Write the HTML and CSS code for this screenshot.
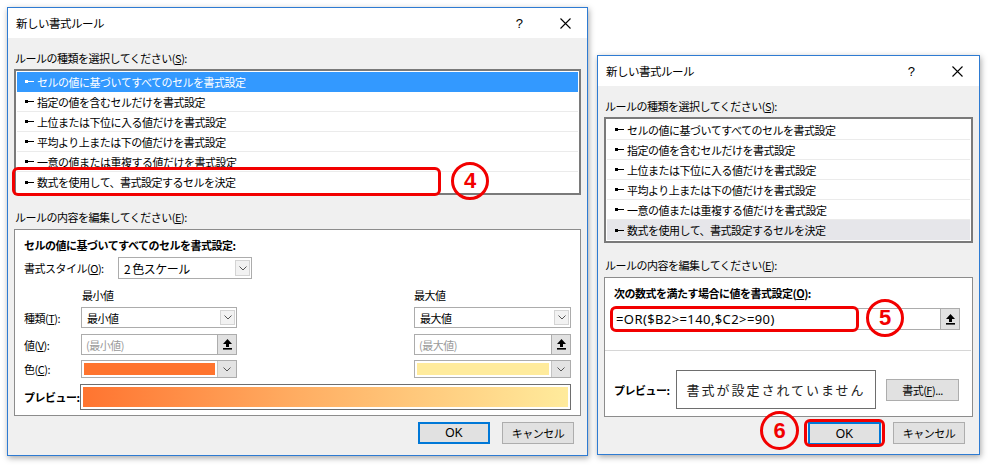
FILE: index.html
```html
<!DOCTYPE html>
<html lang="ja">
<head>
    <meta charset="UTF-8">
    <title>新しい書式ルール</title>
    <link rel="stylesheet" href="styles.css">
</head>
<body>
    <!-- left dialog: two-colour scale -->
    <div class="dialog dialog-left">
        <div class="titlebar">
            <span class="title">新しい書式ルール</span>
            <span class="help">?</span>
            <span class="close"><svg width="11" height="11" viewBox="0 0 11 11"><path d="M0.5 0.5L10.5 10.5M10.5 0.5L0.5 10.5" stroke="#000" stroke-width="1.1"/></svg></span>
        </div>
        <div class="dlg-body">
            <div class="label">ルールの種類を選択してください(<u>S</u>):</div>
            <ul class="rule-list">
                <li class="selected"><svg class="arrow" width="9" height="5" viewBox="0 0 9 5"><rect x="0" y="1" width="3" height="3" fill="currentColor"/><rect x="3" y="2" width="6" height="1" fill="currentColor"/></svg>セルの値に基づいてすべてのセルを書式設定</li>
                <li><svg class="arrow" width="9" height="5" viewBox="0 0 9 5"><rect x="0" y="1" width="3" height="3" fill="currentColor"/><rect x="3" y="2" width="6" height="1" fill="currentColor"/></svg>指定の値を含むセルだけを書式設定</li>
                <li><svg class="arrow" width="9" height="5" viewBox="0 0 9 5"><rect x="0" y="1" width="3" height="3" fill="currentColor"/><rect x="3" y="2" width="6" height="1" fill="currentColor"/></svg>上位または下位に入る値だけを書式設定</li>
                <li><svg class="arrow" width="9" height="5" viewBox="0 0 9 5"><rect x="0" y="1" width="3" height="3" fill="currentColor"/><rect x="3" y="2" width="6" height="1" fill="currentColor"/></svg>平均より上または下の値だけを書式設定</li>
                <li><svg class="arrow" width="9" height="5" viewBox="0 0 9 5"><rect x="0" y="1" width="3" height="3" fill="currentColor"/><rect x="3" y="2" width="6" height="1" fill="currentColor"/></svg>一意の値または重複する値だけを書式設定</li>
                <li><svg class="arrow" width="9" height="5" viewBox="0 0 9 5"><rect x="0" y="1" width="3" height="3" fill="currentColor"/><rect x="3" y="2" width="6" height="1" fill="currentColor"/></svg>数式を使用して、書式設定するセルを決定</li>
            </ul>
            <div class="label label-gap">ルールの内容を編集してください(<u>E</u>):</div>
            <div class="edit-box">
                <div class="heading">セルの値に基づいてすべてのセルを書式設定:</div>
                <div class="row style-row">
                    <span class="style-label">書式スタイル(<u>O</u>):</span>
                    <div class="select style-select">2 色スケール<span class="dd"><svg width="8" height="5" viewBox="0 0 8 5"><path d="M0.5 0.5L4 4L7.5 0.5" fill="none" stroke="#555" stroke-width="1"/></svg></span></div>
                </div>
                <div class="row head-row">
                    <span class="field-label"></span>
                    <span class="col-min">最小値</span>
                    <span class="col-max">最大値</span>
                </div>
                <div class="row type-row">
                    <span class="field-label">種類(<u>T</u>):</span>
                    <div class="select col-min">最小値<span class="dd"><svg width="8" height="5" viewBox="0 0 8 5"><path d="M0.5 0.5L4 4L7.5 0.5" fill="none" stroke="#555" stroke-width="1"/></svg></span></div>
                    <div class="select col-max">最大値<span class="dd"><svg width="8" height="5" viewBox="0 0 8 5"><path d="M0.5 0.5L4 4L7.5 0.5" fill="none" stroke="#555" stroke-width="1"/></svg></span></div>
                </div>
                <div class="row value-row">
                    <span class="field-label">値(<u>V</u>):</span>
                    <div class="input col-min"><span class="placeholder">(最小値)</span><span class="pick"><svg width="9" height="11" viewBox="0 0 9 11"><path d="M4.5 0L9 5H6V8H3V5H0Z" fill="#000"/><rect x="0" y="9" width="9" height="1.6" fill="#000"/></svg></span></div>
                    <div class="input col-max"><span class="placeholder">(最大値)</span><span class="pick"><svg width="9" height="11" viewBox="0 0 9 11"><path d="M4.5 0L9 5H6V8H3V5H0Z" fill="#000"/><rect x="0" y="9" width="9" height="1.6" fill="#000"/></svg></span></div>
                </div>
                <div class="row color-row">
                    <span class="field-label">色(<u>C</u>):</span>
                    <div class="color col-min"><span class="swatch swatch-min"></span><span class="color-dd"><svg width="8" height="5" viewBox="0 0 8 5"><path d="M0.5 0.5L4 4L7.5 0.5" fill="none" stroke="#555" stroke-width="1"/></svg></span></div>
                    <div class="color col-max"><span class="swatch swatch-max"></span><span class="color-dd"><svg width="8" height="5" viewBox="0 0 8 5"><path d="M0.5 0.5L4 4L7.5 0.5" fill="none" stroke="#555" stroke-width="1"/></svg></span></div>
                </div>
                <div class="row preview-row">
                    <span class="preview-label">プレビュー:</span>
                    <div class="gradient-box"><div class="gradient"></div></div>
                </div>
            </div>
            <div class="buttons">
                <button class="btn btn-default">OK</button>
                <button class="btn">キャンセル</button>
            </div>
        </div>
        <div class="mark-rect mark-rule"></div>
        <div class="mark-circle mark-4">4</div>
    </div>

    <!-- right dialog: formula rule -->
    <div class="dialog dialog-right">
        <div class="titlebar">
            <span class="title">新しい書式ルール</span>
            <span class="help">?</span>
            <span class="close"><svg width="11" height="11" viewBox="0 0 11 11"><path d="M0.5 0.5L10.5 10.5M10.5 0.5L0.5 10.5" stroke="#000" stroke-width="1.1"/></svg></span>
        </div>
        <div class="dlg-body">
            <div class="label">ルールの種類を選択してください(<u>S</u>):</div>
            <ul class="rule-list">
                <li><svg class="arrow" width="9" height="5" viewBox="0 0 9 5"><rect x="0" y="1" width="3" height="3" fill="currentColor"/><rect x="3" y="2" width="6" height="1" fill="currentColor"/></svg>セルの値に基づいてすべてのセルを書式設定</li>
                <li><svg class="arrow" width="9" height="5" viewBox="0 0 9 5"><rect x="0" y="1" width="3" height="3" fill="currentColor"/><rect x="3" y="2" width="6" height="1" fill="currentColor"/></svg>指定の値を含むセルだけを書式設定</li>
                <li><svg class="arrow" width="9" height="5" viewBox="0 0 9 5"><rect x="0" y="1" width="3" height="3" fill="currentColor"/><rect x="3" y="2" width="6" height="1" fill="currentColor"/></svg>上位または下位に入る値だけを書式設定</li>
                <li><svg class="arrow" width="9" height="5" viewBox="0 0 9 5"><rect x="0" y="1" width="3" height="3" fill="currentColor"/><rect x="3" y="2" width="6" height="1" fill="currentColor"/></svg>平均より上または下の値だけを書式設定</li>
                <li><svg class="arrow" width="9" height="5" viewBox="0 0 9 5"><rect x="0" y="1" width="3" height="3" fill="currentColor"/><rect x="3" y="2" width="6" height="1" fill="currentColor"/></svg>一意の値または重複する値だけを書式設定</li>
                <li class="inactive"><svg class="arrow" width="9" height="5" viewBox="0 0 9 5"><rect x="0" y="1" width="3" height="3" fill="currentColor"/><rect x="3" y="2" width="6" height="1" fill="currentColor"/></svg>数式を使用して、書式設定するセルを決定</li>
            </ul>
            <div class="label label-gap">ルールの内容を編集してください(<u>E</u>):</div>
            <div class="edit-box">
                <div class="heading">次の数式を満たす場合に値を書式設定(<u>O</u>):</div>
                <div class="formula">=OR($B2&gt;=140,$C2&gt;=90)<span class="pick"><svg width="9" height="11" viewBox="0 0 9 11"><path d="M4.5 0L9 5H6V8H3V5H0Z" fill="#000"/><rect x="0" y="9" width="9" height="1.6" fill="#000"/></svg></span></div>
                <div class="sep"></div>
                <div class="row formula-preview">
                    <span class="preview-label wide">プレビュー:</span>
                    <div class="sample">書式が設定されていません</div>
                    <button class="btn btn-format">書式(<u>F</u>)...</button>
                </div>
            </div>
            <div class="buttons">
                <button class="btn btn-default">OK</button>
                <button class="btn">キャンセル</button>
            </div>
        </div>
        <div class="mark-rect mark-formula"></div>
        <div class="mark-circle mark-5">5</div>
        <div class="mark-circle mark-6">6</div>
        <div class="mark-rect mark-ok"></div>
    </div>
</body>
</html>
```

FILE: styles.css
```css
body {
    margin: 0;
    width: 990px;
    height: 465px;
    overflow: hidden;
    background: #fff;
    display: flex;
    align-items: flex-start;
    font-family: "Noto Sans CJK JP", "Noto Sans", sans-serif;
    font-size: 11px;
    letter-spacing: -0.5px;
    color: #000;
}

u {
    text-decoration: underline;
}

.dialog {
    position: relative;
    box-sizing: border-box;
    border: 1px solid #2e7bd2;
    background: #f0f0f0;
    box-shadow: 1px 2px 6px rgba(0, 0, 0, 0.35);
    display: flex;
    flex-direction: column;
}

.dialog-left {
    width: 581px;
    height: 449px;
    margin: 7px 0 0 7px;
}

.dialog-right {
    width: 383px;
    height: 400px;
    margin: 55px 0 0 9px;
}

.titlebar {
    height: 30px;
    background: #fff;
    display: flex;
    align-items: center;
    padding-left: 8px;
    font-size: 11.5px;
}

.title {
    flex: 1;
}

.help {
    width: 20px;
    margin-right: 14px;
    text-align: center;
    font-family: "Liberation Sans", sans-serif;
    font-size: 13px;
}

.close {
    width: 44px;
    display: flex;
    justify-content: center;
}

.dlg-body {
    flex: 1;
    display: flex;
    flex-direction: column;
    padding: 10px 6px 0 6px;
}

.label {
    height: 20px;
    line-height: 20px;
    padding-left: 1px;
}

.label-gap {
    margin-top: 12px;
}

.rule-list {
    list-style: none;
    margin: 1px 0 0;
    padding: 1px 1px 1px;
    border: 2px solid #7a7a7a;
    background: #fff;
}

.rule-list li {
    box-sizing: border-box;
    height: 20px;
    display: flex;
    align-items: center;
    padding-left: 8px;
    border-bottom: 1px solid #ebebeb;
}

.rule-list li:last-child {
    border-bottom: none;
}

.rule-list li.selected {
    background: #3399ff;
    color: #fff;
    border-bottom-color: #3399ff;
}

.rule-list li.inactive {
    background: #e6e6ea;
}

.arrow {
    margin-right: 3px;
    flex: none;
}

.edit-box {
    margin-top: 2px;
    background: #fff;
    border: 1px solid #8c8c8c;
    padding: 5px 9px 5px;
}

.heading {
    height: 20px;
    line-height: 20px;
    font-weight: bold;
}

.row {
    display: flex;
    align-items: center;
}

.style-row {
    height: 22px;
    margin-top: 2px;
}

.style-label {
    width: 94px;
}

.select,
.input,
.color {
    box-sizing: border-box;
    border: 1px solid #acacac;
    background: #fff;
    display: flex;
    align-items: center;
    height: 100%;
}

.select {
    padding-left: 5px;
}

.style-select {
    width: 134px;
    font-size: 12px;
}

.dd {
    margin: 0 1px 0 auto;
    width: 15px;
    height: calc(100% - 4px);
    box-sizing: border-box;
    border: 1px solid #d4d4d4;
    background: #f2f2f2;
    display: flex;
    align-items: center;
    justify-content: center;
}

.field-label {
    width: 57px;
}

.col-min {
    width: 156px;
}

.col-max {
    width: 157px;
    margin-left: auto;
}

.head-row {
    height: 20px;
    margin-top: 6px;
}

.head-row .col-min {
    padding-left: 1px;
}

.type-row {
    height: 21px;
    margin-top: 2px;
}

.value-row {
    height: 21px;
    margin-top: 6px;
}

.input {
    padding-left: 4px;
}

.placeholder {
    color: #9a9a9a;
    flex: 1;
}

.pick {
    width: 19px;
    height: 100%;
    box-sizing: border-box;
    border-left: 1px solid #adadad;
    background: #e1e1e1;
    display: flex;
    align-items: center;
    justify-content: center;
    flex: none;
}

.color-row {
    height: 18px;
    margin-top: 5px;
}

.color {
    padding: 2px 0 2px 2px;
}

.swatch {
    flex: 1;
    height: 100%;
}

.swatch-min {
    background: #ff742e;
}

.swatch-max {
    background: #ffeb9c;
}

.color-dd {
    width: 18px;
    height: calc(100% + 4px);
    margin: -2px 0 -2px 2px;
    background: #e3e3e3;
    border-left: 1px solid #c4c4c4;
    display: flex;
    align-items: center;
    justify-content: center;
}

.preview-row {
    height: 26px;
    margin-top: 6px;
}

.preview-label {
    width: 56px;
    font-weight: bold;
}

.gradient-box {
    flex: 1;
    height: 100%;
    box-sizing: border-box;
    border: 1px solid #6e6e6e;
    padding: 2px;
}

.gradient {
    height: 100%;
    background: linear-gradient(to right, #ff7430, #ffae63 45%, #ffeb9c);
}

.buttons {
    display: flex;
    justify-content: flex-end;
    gap: 12px;
    margin-top: 6px;
    padding-right: 7px;
}

.dialog-right .buttons {
    margin-top: 5px;
    padding-right: 8px;
}

.btn {
    box-sizing: border-box;
    width: 72px;
    height: 22px;
    border: 1px solid #adadad;
    background: #e1e1e1;
    font-family: "Noto Sans CJK JP", "Noto Sans", sans-serif;
    font-size: 11px;
    letter-spacing: -0.5px;
    padding: 0;
    color: #000;
}

.btn-default {
    border: 2px solid #0078d7;
    font-family: "Liberation Sans", sans-serif;
    font-size: 12px;
    letter-spacing: 0;
}

.dialog-right .btn-default {
    width: 73px;
    height: 23px;
}

.formula {
    box-sizing: border-box;
    height: 22px;
    margin: 5px 3px 0 -3px;
    border: 1px solid #acacac;
    padding-left: 4px;
    display: flex;
    align-items: center;
    justify-content: space-between;
    font-family: "Noto Sans", sans-serif;
    font-size: 13px;
    letter-spacing: 0.4px;
}

.sep {
    height: 1px;
    background: #d6d6d6;
    margin: 20px -8px 0 -9px;
}

.formula-preview {
    height: 39px;
    margin-top: 19px;
    margin-bottom: 2px;
}

.preview-label.wide {
    width: 62px;
}

.sample {
    box-sizing: border-box;
    width: 200px;
    height: 100%;
    border: 1px solid #6e6e6e;
    display: flex;
    align-items: center;
    justify-content: center;
    font-size: 13px;
    letter-spacing: 2px;
    color: #222;
}

.btn-format {
    width: 73px;
    margin-left: 10px;
}

/* red annotation marks */
.mark-rect {
    position: absolute;
    box-sizing: border-box;
    border: 3px solid #f20000;
    border-radius: 6px;
}

.mark-circle {
    position: absolute;
    box-sizing: border-box;
    width: 38px;
    height: 38px;
    border: 3px solid #f20000;
    border-radius: 50%;
    display: flex;
    align-items: center;
    justify-content: center;
    color: #f20000;
    font-family: "Liberation Sans", sans-serif;
    font-weight: bold;
    font-size: 22px;
    letter-spacing: 0;
}

.mark-rule {
    left: 4px;
    top: 159px;
    width: 429px;
    height: 29px;
}

.mark-4 {
    left: 443px;
    top: 154px;
}

.mark-formula {
    left: 12px;
    top: 250px;
    width: 249px;
    height: 26px;
}

.mark-5 {
    left: 268px;
    top: 243px;
}

.mark-6 {
    left: 162px;
    top: 355px;
    width: 39px;
    height: 39px;
}

.mark-ok {
    left: 206px;
    top: 363px;
    width: 81px;
    height: 28px;
}
```
